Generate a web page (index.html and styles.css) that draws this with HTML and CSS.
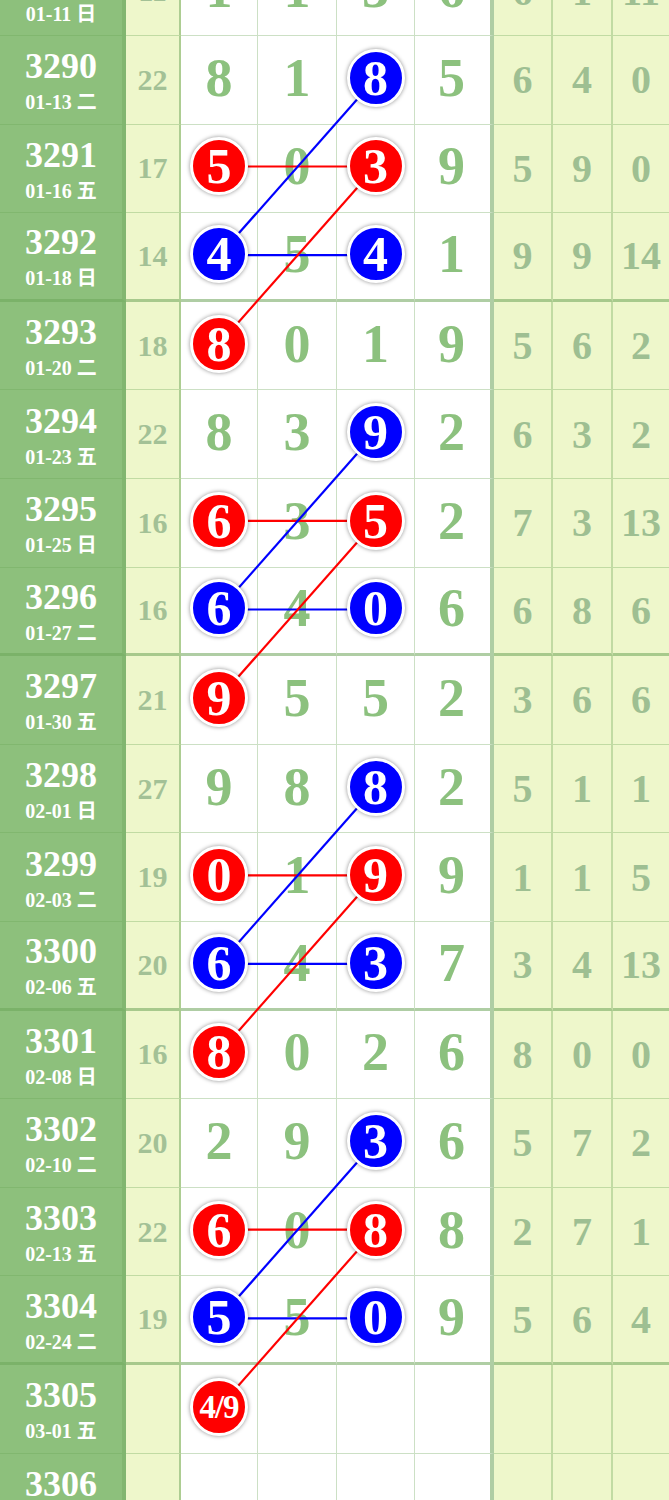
FILE: index.html
```html
<!DOCTYPE html>
<html>
<head>
    <title>走势图</title>
    <meta name="viewport" content="width=device-width, initial-scale=1">
    <link rel="stylesheet" href="styles.css">
</head>
<body>
<div id="chart">
    <svg class="links" width="669" height="1595" viewBox="0 0 669 1595">
        <g id="grp">
            <line class="r" x1="219.5" y1="219.5" x2="376" y2="219.5"/>
            <line class="b" x1="219.5" y1="308.1" x2="376" y2="308.1"/>
            <line class="b" x1="376" y1="130.9" x2="219.5" y2="308.1"/>
            <line class="r" x1="376" y1="219.5" x2="219.5" y2="396.7"/>
        </g>
        <use href="#grp" y="354.4"/>
        <use href="#grp" y="708.8"/>
        <use href="#grp" y="1063.2"/>
    </svg>

    <div class="row">
        <div class="issue"><b>3289</b><span>01-11 日</span></div>
        <div class="sum">11</div>
        <div class="d">1</div><div class="d">1</div><div class="d">3</div><div class="d">6</div>
        <div class="m">6</div><div class="m">1</div><div class="m">11</div>
    </div>
    <div class="row">
        <div class="issue"><b>3290</b><span>01-13 二</span></div>
        <div class="sum">22</div>
        <div class="d">8</div><div class="d">1</div><div class="d"><i class="ball blue">8</i></div><div class="d">5</div>
        <div class="m">6</div><div class="m">4</div><div class="m">0</div>
    </div>
    <div class="row">
        <div class="issue"><b>3291</b><span>01-16 五</span></div>
        <div class="sum">17</div>
        <div class="d"><i class="ball red">5</i></div><div class="d">0</div><div class="d"><i class="ball red">3</i></div><div class="d">9</div>
        <div class="m">5</div><div class="m">9</div><div class="m">0</div>
    </div>
    <div class="row end">
        <div class="issue"><b>3292</b><span>01-18 日</span></div>
        <div class="sum">14</div>
        <div class="d"><i class="ball blue">4</i></div><div class="d">5</div><div class="d"><i class="ball blue">4</i></div><div class="d">1</div>
        <div class="m">9</div><div class="m">9</div><div class="m">14</div>
    </div>

    <div class="row">
        <div class="issue"><b>3293</b><span>01-20 二</span></div>
        <div class="sum">18</div>
        <div class="d"><i class="ball red">8</i></div><div class="d">0</div><div class="d">1</div><div class="d">9</div>
        <div class="m">5</div><div class="m">6</div><div class="m">2</div>
    </div>
    <div class="row">
        <div class="issue"><b>3294</b><span>01-23 五</span></div>
        <div class="sum">22</div>
        <div class="d">8</div><div class="d">3</div><div class="d"><i class="ball blue">9</i></div><div class="d">2</div>
        <div class="m">6</div><div class="m">3</div><div class="m">2</div>
    </div>
    <div class="row">
        <div class="issue"><b>3295</b><span>01-25 日</span></div>
        <div class="sum">16</div>
        <div class="d"><i class="ball red">6</i></div><div class="d">3</div><div class="d"><i class="ball red">5</i></div><div class="d">2</div>
        <div class="m">7</div><div class="m">3</div><div class="m">13</div>
    </div>
    <div class="row end">
        <div class="issue"><b>3296</b><span>01-27 二</span></div>
        <div class="sum">16</div>
        <div class="d"><i class="ball blue">6</i></div><div class="d">4</div><div class="d"><i class="ball blue">0</i></div><div class="d">6</div>
        <div class="m">6</div><div class="m">8</div><div class="m">6</div>
    </div>

    <div class="row">
        <div class="issue"><b>3297</b><span>01-30 五</span></div>
        <div class="sum">21</div>
        <div class="d"><i class="ball red">9</i></div><div class="d">5</div><div class="d">5</div><div class="d">2</div>
        <div class="m">3</div><div class="m">6</div><div class="m">6</div>
    </div>
    <div class="row">
        <div class="issue"><b>3298</b><span>02-01 日</span></div>
        <div class="sum">27</div>
        <div class="d">9</div><div class="d">8</div><div class="d"><i class="ball blue">8</i></div><div class="d">2</div>
        <div class="m">5</div><div class="m">1</div><div class="m">1</div>
    </div>
    <div class="row">
        <div class="issue"><b>3299</b><span>02-03 二</span></div>
        <div class="sum">19</div>
        <div class="d"><i class="ball red">0</i></div><div class="d">1</div><div class="d"><i class="ball red">9</i></div><div class="d">9</div>
        <div class="m">1</div><div class="m">1</div><div class="m">5</div>
    </div>
    <div class="row end">
        <div class="issue"><b>3300</b><span>02-06 五</span></div>
        <div class="sum">20</div>
        <div class="d"><i class="ball blue">6</i></div><div class="d">4</div><div class="d"><i class="ball blue">3</i></div><div class="d">7</div>
        <div class="m">3</div><div class="m">4</div><div class="m">13</div>
    </div>

    <div class="row">
        <div class="issue"><b>3301</b><span>02-08 日</span></div>
        <div class="sum">16</div>
        <div class="d"><i class="ball red">8</i></div><div class="d">0</div><div class="d">2</div><div class="d">6</div>
        <div class="m">8</div><div class="m">0</div><div class="m">0</div>
    </div>
    <div class="row">
        <div class="issue"><b>3302</b><span>02-10 二</span></div>
        <div class="sum">20</div>
        <div class="d">2</div><div class="d">9</div><div class="d"><i class="ball blue">3</i></div><div class="d">6</div>
        <div class="m">5</div><div class="m">7</div><div class="m">2</div>
    </div>
    <div class="row">
        <div class="issue"><b>3303</b><span>02-13 五</span></div>
        <div class="sum">22</div>
        <div class="d"><i class="ball red">6</i></div><div class="d">0</div><div class="d"><i class="ball red">8</i></div><div class="d">8</div>
        <div class="m">2</div><div class="m">7</div><div class="m">1</div>
    </div>
    <div class="row end">
        <div class="issue"><b>3304</b><span>02-24 二</span></div>
        <div class="sum">19</div>
        <div class="d"><i class="ball blue">5</i></div><div class="d">5</div><div class="d"><i class="ball blue">0</i></div><div class="d">9</div>
        <div class="m">5</div><div class="m">6</div><div class="m">4</div>
    </div>

    <div class="row">
        <div class="issue"><b>3305</b><span>03-01 五</span></div>
        <div class="sum"></div>
        <div class="d"><i class="ball red small">4/9</i></div><div class="d"></div><div class="d"></div><div class="d"></div>
        <div class="m"></div><div class="m"></div><div class="m"></div>
    </div>
    <div class="row">
        <div class="issue"><b>3306</b><span>03-03 日</span></div>
        <div class="sum"></div>
        <div class="d"></div><div class="d"></div><div class="d"></div><div class="d"></div>
        <div class="m"></div><div class="m"></div><div class="m"></div>
    </div>
</div>
</body>
</html>
```

FILE: styles.css
```css
body { margin: 0; overflow: hidden; background: #fff; font-family: 'Liberation Serif', serif; }

#chart { position: relative; margin-top: -52.6px; width: 669px; }
.links { position: absolute; top: 0; left: 0; z-index: 1; pointer-events: none; }
.links line { stroke-width: 2.2; }
.links .r { stroke: #f00; }
.links .b { stroke: #00f; }

.row { display: grid; grid-template-columns: 126px 55px 77px 79px 78px 79px 59px 60px 56px; height: 88.6px; }
.row > div { box-sizing: border-box; display: flex; align-items: center; justify-content: center;
             border-bottom: 1px solid rgba(110, 165, 90, 0.35); border-right: 1px solid rgba(110, 165, 90, 0.35); }
.row.end > div { border-bottom: 3px solid rgba(110, 165, 90, 0.55); }

.issue { flex-direction: column; background: #8dc07c; color: #fff; border-right: 4px solid #82b670 !important; padding-top: 2px; }
.issue b { font-size: 36px; line-height: 34px; font-weight: 700; }
.issue span { font-size: 20px; line-height: 20px; font-weight: 700; margin-top: 9px;
              font-family: 'Liberation Serif', 'Noto Sans CJK SC', serif; }

.sum { background: #eef7cb; color: #a3c196; font-size: 30px; font-weight: 700; border-right: 2px solid rgba(110, 165, 90, 0.5) !important; }

.d { color: #8cc17e; font-size: 54px; font-weight: 700; padding-bottom: 4px; }
.d:nth-child(6) { border-right: 4px solid rgba(110, 165, 90, 0.55) !important; padding-right: 2px; }

.m { background: #eef7cb; color: #9ebf92; font-size: 40px; font-weight: 700; border-right: 2px solid rgba(110, 165, 90, 0.35) !important; }
.m:last-child { border-right: none !important; }

.ball { position: relative; z-index: 2; box-sizing: border-box; width: 58px; height: 58px; border-radius: 50%;
        border: 3px solid #fff; box-shadow: 0 0 4px rgba(0, 0, 0, 0.45); color: #fff; font-style: normal;
        font-size: 50px; line-height: 50px; display: flex; align-items: center; justify-content: center; }
.ball.red { background: #f00; }
.ball.blue { background: #00f; }
.ball.small { font-size: 33px; letter-spacing: -1px; }
```
